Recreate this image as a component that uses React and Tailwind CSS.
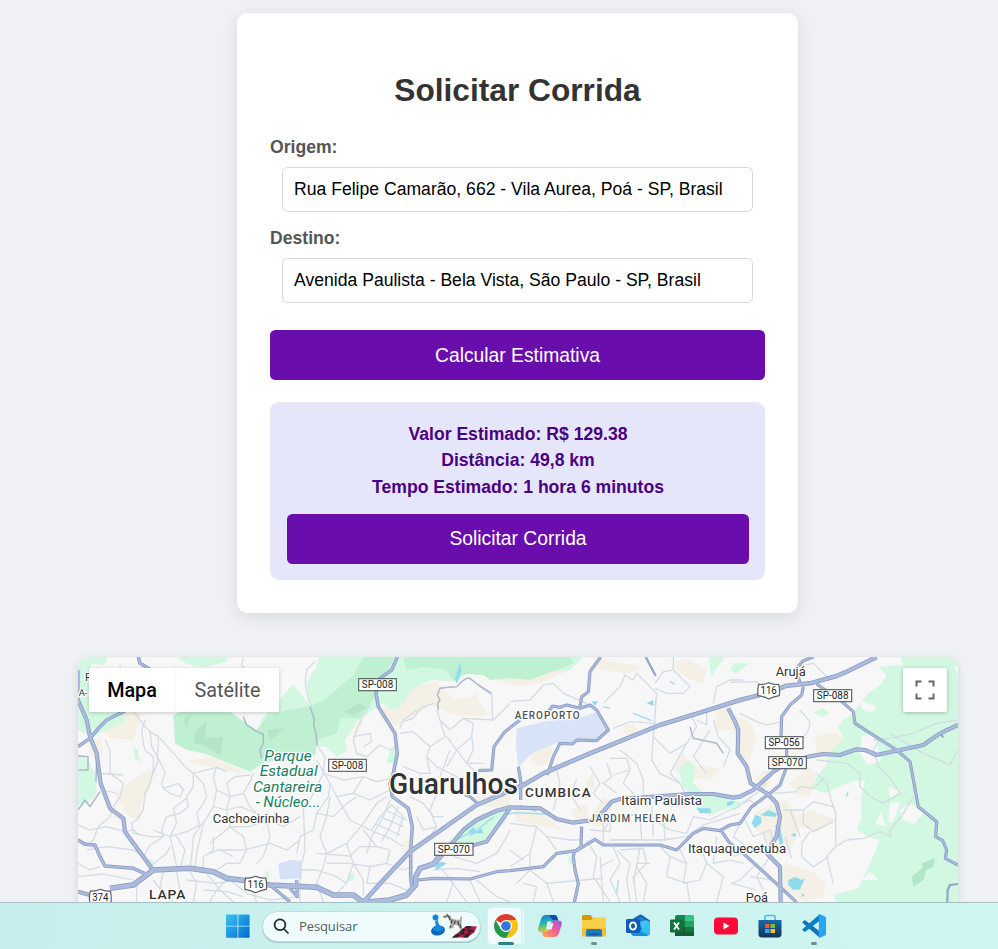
import React from "react";

const LIGHT_GREEN = [
  "24,21 112,21 104,46 66,40 60,60 100,100 160,170 165,215 120,235 70,260 24,240",
  "24,315 55,330 78,380 80,430 55,460 24,465",
  "320,21 475,21 470,36 440,42 400,52 350,42",
  "190,290 205,300 205,320 218,335 195,328",
  "208,620 250,632 246,655",
  "585,666 597,664 597,688 585,690",
  "835,672 852,672 852,692 835,692",
  "960,300 985,285 980,338 950,340",
  "570,215 590,190 670,103 722,170 700,220 600,240",
  "745,21 1000,21 950,150 860,215 840,250 825,270 832,300 800,320 770,290 738,290 720,170 708,100 740,50",
  "925,150 960,60 990,21 1100,21 1180,85 1150,95 1090,90 1060,100 1020,125 1000,160 985,175 960,178",
  "1300,80 1500,60 1540,21 1480,21 1320,40",
  "1090,630 1140,570 1190,520 1240,490 1320,475 1310,510 1250,575 1160,605",
  "1830,350 1850,335 1875,345 1870,400 1900,430 1980,440 1985,470 1920,495 1880,480 1860,430 1835,410",
  "1915,21 1965,21 1940,55 1925,80",
  "1950,50 1980,60 1990,40 2040,40 2000,70",
  "2230,185 2260,175 2280,190 2255,202",
  "2490,21 2664,21 2664,759 2300,759 2290,735 2365,715 2400,640 2430,570 2395,560 2360,540 2375,500 2372,450 2385,390 2345,395 2310,410 2265,430 2225,415 2240,380 2265,350 2285,300 2320,270 2305,230 2325,205 2350,190 2370,160 2395,130 2435,100 2450,75 2425,50 2500,45",
  "1495,620 1510,615 1512,640 1495,640",
  "1980,450 2010,455 2012,470 1980,485",
];
const MID_GREEN = [
  "310,195 370,170 480,185 560,240 590,200 645,182 722,168 770,145 850,75 880,21 972,21 950,65 920,135 890,175 870,205 812,205 800,250 742,270 735,318 700,310 660,318 580,340 540,365 490,345 440,325 400,310 350,300 315,280",
  "1000,21 1320,21 1320,85 1260,90 1240,75 1190,72 1150,90 1130,60 1060,50 1010,60",
  "1320,21 1500,21 1510,40 1460,60 1380,90 1320,85",
];
const SHADE_GREEN = [
  "380,240 410,215 405,265 460,260 450,315 400,285 370,280",
  "590,240 645,235 600,272",
  "340,210 365,190 350,235",
  "820,185 870,160 890,175 850,195",
  "2525,680 2575,640 2560,690 2530,710",
  "2555,640 2595,625 2590,650 2560,665",
];
const WHITE_PATCHES = [
  "2370,150 2420,170 2400,190 2375,175",
  "2375,260 2410,250 2435,330 2395,345 2370,310",
  "2455,410 2490,425 2460,445",
  "2435,485 2445,530 2415,520",
  "2460,460 2490,455 2470,515 2455,515",
  "2490,480 2520,460 2560,490 2530,525 2500,510",
  "2400,665 2425,690 2375,690",
  "2650,45 2664,55 2664,75",
  "2270,205 2310,190 2320,205 2290,225",
];
const TAN = [
  "100,240 160,185 215,190 190,270 120,265",
  "60,270 95,265 100,310 75,330 55,305",
  "135,430 240,355 255,365 235,430 215,455 210,510 180,500 150,460",
  "355,330 440,322 490,350 530,365 510,372 440,352 370,340",
  "925,190 980,140 1030,100 1090,135 1100,155 1020,205 980,230 935,210",
  "1030,110 1100,95 1150,150 1200,140 1230,160 1255,195 1200,200 1140,190 1080,165 1020,180",
  "1280,90 1310,70 1500,60 1420,95 1350,110",
  "1170,160 1220,130 1230,160 1210,180",
  "1385,300 1450,285 1440,330 1420,350 1380,335",
  "1330,475 1430,500 1480,540 1340,515",
  "1600,440 1630,460 1620,500 1590,530 1550,520",
  "1500,480 1555,460 1550,510 1520,505",
  "1550,390 1570,370 1575,420 1550,410",
  "1660,225 1690,220 1705,245 1680,255 1660,250",
  "1810,350 1840,310 1870,345 1950,355 1920,390 1835,380",
  "1800,40 1850,25 1910,60 1900,100 1850,85",
  "1570,25 1720,50 1680,70 1590,60",
  "1935,180 1975,170 1990,240 1940,240",
  "1980,190 2040,215 2060,260 2040,330 2005,320",
  "2050,400 2080,360 2110,370 2090,420",
  "2235,260 2290,245 2320,265 2280,340 2240,310",
  "2160,400 2215,350 2240,370 2220,440 2190,440",
  "2050,490 2100,465 2150,450 2180,500 2220,480 2300,510 2240,545 2190,530 2160,600 2125,605 2060,540",
  "2140,640 2230,665 2270,700 2260,740 2200,755 2140,720",
  "1000,575 1020,560 1020,610 1000,610",
  "1190,440 1320,430 1320,470 1240,470 1220,460",
  "1880,430 1960,470 1930,500 1890,490",
  "850,230 880,200 870,240 855,260",
];
const WATER = [
  "1170,35 1175,60 1162,100 1154,90 1164,60",
  "1095,660 1100,640 1115,635 1130,640 1105,657",
  "1195,545 1212,530 1218,545 1235,535 1240,550 1215,550 1195,562 1205,548",
  "1565,155 1585,152 1575,168",
  "1730,160 1750,150 1750,168",
  "1880,475 1920,475 1925,488 1890,490",
  "1970,458 1988,452 1985,466 1972,468",
  "2045,520 2055,495 2072,500 2075,518 2055,535",
  "2072,495 2095,480 2120,490 2118,500 2085,498",
  "2115,525 2130,530 2140,580 2130,585",
  "2155,690 2175,680 2195,690 2205,685 2190,718 2170,720 2155,705",
  "2162,555 2175,548 2180,562",
  "2195,730 2205,735 2195,742",
  "1975,456 1995,454 1985,465",
];

const MINOR = [
  "150,45 155,170", "190,185 225,230 240,245 265,260 320,320 345,350 370,370 440,352 470,365",
  "225,210 215,240 220,280 225,300 250,320 250,360 240,400 225,430 220,480 200,510 185,520 190,550",
  "240,245 245,290 275,345 285,370 275,400 280,415 325,400 340,420 330,440 300,430 280,415",
  "265,260 262,340 250,370", "105,270 120,300 120,370 160,400 150,440 130,470 120,500 85,530 70,570 55,585",
  "370,370 370,410 350,440 355,470 330,490 290,500 275,540 280,560 240,585 220,620",
  "370,370 400,400 410,440 400,460 380,490 390,530 370,560 365,620 360,655",
  "350,445 310,475 320,520 300,560 310,600 320,650", "440,350 430,380 440,420 480,440 520,430 540,395 550,370",
  "440,420 430,470 400,520 380,610 375,650", "480,440 470,480 480,530 520,560 530,600 510,640 470,640 440,660",
  "420,580 480,530 540,530 590,510 640,530 690,500", "440,600 520,600 600,580 650,600 690,570",
  "430,470 470,480 510,470 560,490 590,510 600,560 580,620 560,640", "250,540 300,560 350,545 400,520",
  "190,550 240,560 280,560", "210,555 190,540 165,545", "24,525 60,540 110,530 165,545", "50,600 110,590 190,600 220,620",
  "80,370 120,372 160,375", "100,420 140,430", "24,680 100,672 190,690", "24,640 60,660 90,650",
  "300,590 290,610 240,650", "330,655 345,600 320,560", "400,655 400,620 430,600 430,560", "490,620 450,600 420,610",
  "480,440 470,400 495,380 540,375", "520,430 540,470 560,490", "470,690 440,720 420,755", "360,665 380,700 370,755",
  "320,665 330,720 350,755", "250,690 280,730 300,755", "410,670 450,720 490,755", "280,665 270,710 310,755",
  "480,690 530,730 600,750 690,740", "200,700 200,755", "400,720 470,725 520,740", "540,700 560,755", "350,690 440,700 500,690",
  "520,21 515,45 550,90 600,100",
  "735,35 710,60 705,100 715,150 725,170", "740,285 765,320 760,370 740,410 720,450 700,470 705,600 690,660 690,755",
  "740,330 780,400 775,440 740,490 730,540 690,560 680,610", "760,370 820,390 880,380 920,395 965,385",
  "900,165 880,195 860,240 850,270 860,310 890,320 930,285 960,300 975,290", "850,260 900,250 905,275 880,290",
  "780,400 800,440 850,430 900,450 960,420", "780,440 770,500 750,560 770,610 760,650 740,700 760,755",
  "800,440 840,510 900,540 960,565 1000,590", "740,490 790,500 830,460 860,440",
  "770,610 830,580 880,520 920,460 950,440", "850,430 880,380", "905,540 930,500 965,465 1000,500 980,560",
  "880,540 920,590 960,600 950,640 1000,660 1030,650", "830,580 850,640 830,700 800,730", "740,610 840,618 870,590 920,590",
  "770,640 840,640 900,650 950,640", "690,660 740,660 800,680 830,700", "930,500 1000,530", "945,480 1010,510", "915,520 990,555",
  "960,450 940,500 905,560 890,610", "985,470 960,530 935,575", "850,640 880,690 880,740", "900,650 890,700 960,700 1010,720",
  "1100,180 1110,210 1140,240 1180,205 1210,220 1205,260 1160,300 1130,350",
  "1110,210 1125,260 1080,290 1070,320 1100,350 1160,380 1190,420", "1080,290 1030,245 990,250",
  "1130,260 1190,340 1220,370 1210,410", "1180,205 1270,210 1320,160", "1230,110 1265,135 1268,210",
  "1205,260 1210,300 1190,340 1240,340", "1070,320 1080,370 1050,370 1060,400", "1140,300 1110,380 1130,400",
  "1050,370 1000,350", "1100,430 1080,480 1100,530 1080,560", "1040,180 1000,210 990,235", "1090,160 1050,175 1030,205 1000,215",
  "1020,440 1060,460 1090,500 1120,500", "1040,500 1060,540 1100,530", "1110,650 1150,700 1130,755", "1140,690 1190,755", "1200,690 1230,755",
  "1220,690 1280,740 1320,755", "1150,620 1220,640 1280,610 1310,560 1320,540", "1090,660 1160,655 1230,665",
  "1320,155 1380,150 1420,105 1450,100 1480,130 1550,160", "1600,160 1650,110 1665,75 1690,90 1700,70 1730,100 1760,130 1755,170",
  "1755,100 1780,65 1810,60 1840,90 1860,110 1840,130 1790,130 1755,115", "1810,60 1810,21", "1760,130 1750,260 1800,310 1850,280 1880,230 1860,190",
  "1750,260 1745,330 1770,370 1830,400 1850,440 1840,470", "1850,280 1800,370 1830,400", "1630,235 1680,215 1760,220",
  "1930,160 1940,110 1980,90 2020,90", "1620,325 1670,325 1680,360 1660,400 1690,430 1700,460", "1610,340 1625,380 1600,400 1640,430",
  "1560,350 1590,400 1570,430 1600,460", "1650,300 1700,340 1720,390 1720,440", "1680,360 1630,375", "1880,210 1910,225 1910,180",
  "1930,210 1945,260 1980,300 1960,350", "1920,240 1870,320 1910,370", "1520,390 1500,430 1530,480", "1460,360 1470,400 1450,480",
  "1320,520 1400,530 1430,560 1500,570 1530,570", "1400,530 1380,610 1380,660 1430,700 1450,755", "1430,560 1460,600",
  "1380,660 1340,700", "1360,700 1400,710 1390,755", "1430,700 1540,690 1600,685", "1380,610 1320,650", "1320,600 1360,630",
  "1550,570 1580,620 1570,680 1620,755", "1590,620 1600,755", "1630,590 1650,640 1620,690 1650,755", "1650,600 1720,595 1730,640 1690,680 1700,755",
  "1710,590 1700,650 1730,700 1720,755", "1740,640 1700,640 1690,700", "1640,600 1680,640 1670,690 1680,755", "1590,650 1630,630",
  "1770,590 1800,620 1790,680 1850,700 1860,755", "1830,600 1850,640 1840,700 1890,690 1910,640 1890,590", "1910,640 1960,680 1940,755",
  "1940,560 1930,640 1980,630 2020,640", "1800,620 1850,640", "1600,545 1620,510 1680,495 1740,500 1800,540 1850,550",
  "1620,570 1700,570 1780,570 1850,560 1900,525 1980,500 2010,490", "1710,500 1715,570", "1780,490 1785,570", "1745,460 1750,560",
  "1600,500 1600,580", "1560,540 1620,545 1620,510", "1850,550 1870,500 1920,510 1980,480", "2020,500 2050,560 2100,540 2110,570",
  "2010,520 1990,560 2030,590", "1990,620 2060,590 2100,620 2060,680 2080,720", "2060,640 2010,690 1985,700 2060,720", "2040,680 2110,690",
  "2080,550 2110,640", "2140,480 2200,480 2230,455 2290,470 2297,490 2297,590 2270,620 2290,700",
  "2240,370 2270,400 2280,440 2297,490", "2110,430 2180,425 2190,410 2230,415 2265,380", "2200,480 2200,520 2230,545 2290,515",
  "2220,545 2195,580 2195,620 2230,650 2275,620", "2160,480 2190,560", "2145,560 2165,625", "2190,180 2220,215 2215,240 2195,270 2190,300",
  "2135,215 2090,225 2060,215 2010,190", "2240,330 2330,340 2370,370 2370,410 2400,440", "1980,97 2060,95 2080,115",
  "2180,50 2230,40 2270,80 2240,100", "2297,590 2330,570 2380,565 2430,545 2460,560 2460,540 2500,490 2530,440",
  "2430,265 2410,300 2425,350 2465,390 2490,430 2440,460 2400,440", "2410,270 2460,265 2530,250 2600,220 2664,210",
  "2460,250 2560,310 2640,345 2664,300", "2020,460 2040,450 2060,470", "1990,480 2030,450 2060,430 2090,400",
];
const RIDGES = [
  "520,200 530,225 560,245 580,252 580,280 570,300 575,325", "720,170 732,205 731,225 738,250 742,285",
  "1105,180 1103,160 1110,150 1102,135 1110,115 1135,112 1160,110 1175,95 1190,85 1200,85 1225,105 1265,130",
  "24,317 54,320 54,360 26,360", "24,480 45,450 60,470 90,425", "80,315 78,395",
  "1860,230 1870,265 1940,280 1960,310",
];
const MAJOR = [
  ["24,150 50,210 60,260 80,310 92,400 120,475 160,505 165,545 245,655", 11],
  ["24,290 60,265 85,235 110,210 160,185 200,160", 9],
  ["205,21 210,40 240,58", 9],
  ["24,60 24,160", 8],
  ["24,570 45,583 75,585 90,620 105,648 190,655 235,675", 9],
  ["24,725 60,735", 11],
  ["120,715 190,705 250,660 360,655 430,665 470,685 530,692 600,705 740,712 790,735 850,735 880,757 960,750 1010,735 1037,705 1037,680 1050,655 1095,640", 15],
  ["1095,640 1130,600 1180,540 1220,510 1280,482 1320,472 1410,475 1460,507 1510,518 1570,510 1600,485 1625,455 1650,447 1860,432 1930,432 1990,443 2010,440 2050,420 2110,365 2150,340 2215,320 2260,312 2310,315 2360,298 2385,300 2420,315 2480,302 2560,285 2610,250 2664,225", 11],
  ["880,757 940,690 1020,605 1220,465 1360,405 1420,370 1560,310 1770,225 1900,185 2010,150 2090,130 2150,107 2220,100 2300,78 2330,65 2420,21", 12],
  ["982,21 965,60 930,85 918,130 925,170 975,250 982,310 970,370 960,400 967,440 1015,475 1027,530 1022,600 1022,680 1025,710", 9],
  ["1045,690 1090,685 1200,687 1280,665 1320,662 1420,650 1460,610 1520,602 1575,568 1600,585 1700,585 1770,585 1820,600 1870,550 1900,535 1950,542 1980,525 2010,520 2045,470 2100,430 2130,405 2150,350 2150,290 2133,260 2135,200 2160,165 2195,135 2200,110", 8],
  ["1090,640 1110,610 1160,600 1250,575 1320,475", 10],
  ["1955,545 1980,580 2020,610 2140,720 2180,757", 8],
  ["1975,175 1995,215 2005,240 2003,310 2030,350 2042,400 2090,430 2120,460 2130,500 2120,560 2100,590 2090,610 2130,650 2132,757", 11],
  ["2240,102 2310,150 2350,185 2355,220 2480,300 2520,335 2545,470 2600,515 2597,560 2618,572 2630,600 2626,625 2664,645", 8],
  ["2175,60 2200,32 2230,21", 8], ["2185,80 2190,100", 8],
  ["2632,757 2633,720 2640,705 2664,702", 5],
  ["1225,362 1265,360 1272,290 1305,245 1350,210", 8],
  ["1435,185 1448,168 1470,172 1490,165 1530,175 1560,165 1580,180 1615,240 1580,272 1520,270 1508,282 1470,280 1450,320 1432,375", 8],
  ["1592,21 1560,65 1555,125 1535,140 1530,170", 8],
  ["1345,350 1353,400 1352,450", 8],
  ["1535,530 1533,590 1513,605 1510,620 1515,660 1525,700 1513,757", 8],
  ["1727,21 1757,77", 5], ["1185,435 1200,440 1222,460", 7],
  ["680,690 682,740 660,715", 8], ["600,705 660,755", 8], ["2610,250 2620,262", 4],
];

function Poly({ list, fill }) {
  return list.map((p, i) => <polygon key={i} points={p} fill={fill} />);
}

function Lines({ list, stroke, width }) {
  return (
    <g fill="none" stroke={stroke} strokeWidth={width} strokeLinejoin="round">
      {list.map((p, i) => <polyline key={i} points={p} />)}
    </g>
  );
}

function Shield({ x, y, w, label }) {
  return (
    <g>
      <rect x={x} y={y} width={w} height="36" fill="#fff" stroke="#5b5f63" strokeWidth="3.5" />
      <text x={x + w / 2} y={y + 29} fontSize="30" textAnchor="middle" textLength={w - 19} lengthAdjust="spacingAndGlyphs" fill="#222">{label}</text>
    </g>
  );
}

function Hexagon({ x, y, label }) {
  return (
    <g transform={`translate(${x} ${y})`}>
      <path d="M3 6 Q18 8 33 1 Q48 8 63 6 Q67 20 65 40 Q48 42 33 50 Q18 42 1 40 Q-1 20 3 6Z" fill="#fff" stroke="#5b5f63" strokeWidth="3.5" />
      <text x="33" y="36" fontSize="30" textAnchor="middle" textLength="49" lengthAdjust="spacingAndGlyphs" fill="#222">{label}</text>
    </g>
  );
}

function Label({ x, y, w, size, children, ...rest }) {
  return (
    <text x={x} y={y} fontSize={size} textLength={w} lengthAdjust="spacingAndGlyphs" {...rest}>{children}</text>
  );
}

function CityMap() {
  const halo = { paintOrder: "stroke", stroke: "#fff", strokeWidth: 8, strokeLinejoin: "round" };
  return (
    <svg className="block h-[246px] w-[880px]" viewBox="24 21 2640 738" fontFamily="Roboto, sans-serif">
      <rect x="24" y="21" width="2640" height="738" fill="#f7f7f7" />
      <Poly list={TAN} fill="#f5f0e6" />
      <Poly list={LIGHT_GREEN} fill="#d3f8e2" />
      <Poly list={MID_GREEN} fill="#bef0d1" />
      <Poly list={SHADE_GREEN} fill="#b3e6c6" opacity=".45" />
      <Poly list={WHITE_PATCHES} fill="#f7f7f7" />
      <polygon points="1340,235 1420,215 1540,200 1580,185 1615,240 1580,270 1460,280 1385,310 1345,352 1338,290" fill="#d8e3f7" />
      <polygon points="625,642 660,630 695,632 695,685 630,688" fill="#d5e1f7" />
      <Poly list={WATER} fill="#90daee" />
      <Lines list={["1165,565 1200,548 1220,540 1270,502", "1300,495 1340,488 1425,492", "1690,190 1745,212", "1350,465 1400,485", "1645,690 1640,730", "2330,440 2334,425", "1800,95 1815,103", "1600,170 1620,175"]} stroke="#9adced" width={4} />
      <Lines list={MINOR} stroke="#d3dbe5" width={3.8} />
      <Lines list={RIDGES} stroke="#aeb8ca" width={4.5} />
      {MAJOR.map(([p, w], i) => (
        <polyline key={i} points={p} fill="none" stroke="#8799c4" strokeWidth={w + 1.500} strokeLinejoin="round" />
      ))}
      {MAJOR.map(([p, w], i) => (
        <polyline key={i} points={p} fill="none" stroke="#abbbdc" strokeWidth={w - 3} strokeLinejoin="round" />
      ))}
      <Shield x={866} y={86} w={113} label="SP-008" />
      <Shield x={776} y={328} w={113} label="SP-008" />
      <Shield x={1094} y={580} w={115} label="SP-070" />
      <Shield x={2231} y={119} w={114} label="SP-088" />
      <Shield x={2086} y={260} w={113} label="SP-056" />
      <Shield x={2096} y={320} w={113} label="SP-070" />
      <Hexagon x={524} y={678} label="116" />
      <Hexagon x={2063} y={97} label="116" />
      <Hexagon x={58} y={717} label="374" />
      <g fill="#333" style={halo}>
        <text x="45" y="94" fontSize="32">F</text>
        <text x="26" y="137" fontSize="28">A-</text>
        <Label x="428" y="518" size="41" w="230">Cachoeirinha</Label>
        <Label x="957" y="432" size="88" w="387" fontWeight="500">Guarulhos</Label>
        <Label x="1654" y="466" size="41" w="242">Itaim Paulista</Label>
        <Label x="1854" y="610" size="41" w="294">Itaquaquecetuba</Label>
        <Label x="2117" y="79" size="41" w="90">Arujá</Label>
        <Label x="2027" y="756" size="41" w="67">Poá</Label>
        <g fontWeight="500">
          <Label x="237" y="747" size="39" w="112" letterSpacing="2.500">LAPA</Label>
          <Label x="1365" y="441" size="39" w="200" letterSpacing="3">CUMBICA</Label>
          <Label x="1334" y="208" size="30" w="198" letterSpacing="3" fill="#505358">AEROPORTO</Label>
          <Label x="1558" y="517" size="30" w="264" letterSpacing="3" fill="#505358">JARDIM HELENA</Label>
        </g>
      </g>
      <g fill="#188062" fontStyle="italic" textAnchor="middle" style={halo}>
        <Label x="654" y="332" size="45" w="142">Parque</Label>
        <Label x="656" y="378" size="45" w="174">Estadual</Label>
        <Label x="653" y="425" size="45" w="208">Cantareira</Label>
        <Label x="654" y="471" size="45" w="194">- Núcleo...</Label>
      </g>
    </svg>
  );
}

function Field({ label, value }) {
  return (
    <div className="flex flex-col">
      <label className="mb-[10px] block text-[17.6px] leading-[20px] font-bold text-[#555]">{label}</label>
      <input
        readOnly
        defaultValue={value}
        className="mx-3 mb-4 h-[45px] rounded-[5.5px] border border-[#d8d8dc] px-[11px] text-[17.6px] text-black outline-none"
      />
    </div>
  );
}

function PurpleButton({ children }) {
  return (
    <button className="flex h-[50px] w-full items-center justify-center rounded-[5.5px] bg-[#6a0dad] text-[19.3px] leading-[22px] text-white">{children}</button>
  );
}

function AppSlot({ children, active, open }) {
  return (
    <div className="relative flex h-[38px] w-11 shrink-0 items-center justify-center">
      {active && <div className="absolute inset-y-0 left-[3px] w-[38px] rounded-[4px] border border-[#d6f0f0] bg-[#e0f7f6]" />}
      {active && <div className="absolute inset-y-0 left-[3px] w-[35px] rounded-[4px] border border-[#d6f0f0] bg-[#f0fcfb]" />}
      <svg className="relative size-6" viewBox="0 0 24 24">{children}</svg>
      {active && <div className="absolute bottom-0 h-[3px] w-4 rounded-full bg-[#2d8388]" />}
      {open && <div className="absolute bottom-0 h-[3px] w-[6px] rounded-full bg-[#7b8b8b]" />}
    </div>
  );
}

function Taskbar() {
  return (
    <div className="absolute inset-x-0 bottom-0 flex h-[47px] items-center border-t border-[#9fc0c8] bg-linear-to-r from-[#c7eeec] to-[#d0f6f2] pl-[226px]">
      <svg className="size-6 shrink-0" viewBox="0 0 24 24">
        <defs>
          <linearGradient id="win" x1="0" y1="0" x2="24" y2="24" gradientUnits="userSpaceOnUse">
            <stop offset="0" stopColor="#3cc5f5" /><stop offset="1" stopColor="#0068c9" />
          </linearGradient>
        </defs>
        <path d="M0 1.5Q0 .5 1 .5h10.500v11.200H0zM12.300 .5h10.500q.8 0 .8 1v10.200H12.300zM0 12.500h11.500v11.200H1q-1 0-1-1zM12.300 12.500h11.300v10.200q0 1-.8 1H12.300z" fill="url(#win)" />
      </svg>
      <div className="ml-3 flex h-[31px] w-[219px] shrink-0 items-center rounded-full border border-[#bddfdf] bg-[#effcfb] pl-[10px] shadow-[0_1px_0_#a5c8c9]">
        <svg className="size-4" viewBox="0 0 16 16" fill="none" stroke="#20272a" strokeWidth="1.7" strokeLinecap="round">
          <circle cx="7" cy="6.800" r="5.400" /><path d="M11 11l4 4" />
        </svg>
        <span className="ml-[10px] translate-y-px font-['Open_Sans',sans-serif] text-[13px] tracking-[-0.1px] text-[#52605f]">Pesquisar</span>
        <svg className="ml-auto mr-px h-7 w-[50px]" viewBox="0 0 50 28">
          <ellipse cx="9" cy="18.500" rx="7" ry="5" fill="#0868b9" transform="rotate(-12 9 18.500)" />
          <path d="M5 17C8 14 6 11 6 9l3-1c0 3 1 6 6 8z" fill="#1688dd" />
          <ellipse cx="9" cy="16.500" rx="5" ry="3" fill="#1688dd" />
          <circle cx="6.500" cy="5.500" r="3" fill="#1386d9" />
          <path d="M13.500 4.500l3-1.500 1.500-2 1.500 2 2 .5 1 3 4 1 4 .5 1.500-4 1 .2-.3 5.300-.5 3 1 5-2.500-.2-1.500-4-4-1-1 4.200-2.200-.5.2-4.500-2-3.500-1-2.500-3.500.2z" fill="#aaa9a4" />
          <path d="M18 3l2 2 1 3M23 8l-1 4M26 8.500l-.5 4M29 9l.5 4.500M14.500 5l2.500-.5M21.500 13l-.5 3.500M31 12l1 4" stroke="#494b49" strokeWidth="1.200" fill="none" />
          <path d="M23 25.500L37 14l11 .5-3 6-7 5z" fill="#c4183b" />
          <path d="M23 25.500l4-3.300 5 .3-4 3zM31 19l3-2.500 4 .5-3.500 3zM38 14l5 .3-3 2.700-4-1.200zM38 17.500l5-.3 2 2-5 1.800zM34 25.500l3-4 5-.5-3 4.500zM31 20l4 0 1 2-4 1z" fill="#222831" />
        </svg>
      </div>
      <div className="ml-[3px] flex">
        <AppSlot active>
          <path d="M12 12L1.608 6A12 12 0 0 1 22.392 6z" fill="#df3b2f" />
          <path d="M12 6h10.392A12 12 0 0 1 12 24l5.200-9z" fill="#fbc116" />
          <path d="M1.608 6A12 12 0 0 0 12 24l5.200-9H6.800z" fill="#279847" />
          <circle cx="12" cy="12" r="6" fill="#fff" />
          <circle cx="12" cy="12" r="4.800" fill="#3376e0" />
        </AppSlot>
        <AppSlot>
          <defs>
            <linearGradient id="cpa" x1="0" y1="0" x2=".3" y2="1"><stop stopColor="#1673d9" /><stop offset=".5" stopColor="#22b6b5" /><stop offset="1" stopColor="#d9ca32" /></linearGradient>
            <linearGradient id="cpb" x1="1" y1="0" x2="0" y2="1"><stop stopColor="#a252e7" /><stop offset=".5" stopColor="#f06291" /><stop offset="1" stopColor="#ffad49" /></linearGradient>
          </defs>
          <path d="M8 1h8.500q2 0 2.700 2l1 3.500H16q-2.200 0-3 2.500l-1.700 5.500Q10 18 7.500 18H3Q-.8 18 .3 14L3 5Q4.300 1 8 1z" fill="url(#cpa)" />
          <path d="M11 1h5.500q2 0 2.700 2l1 3.500H16q-1.500 0-2.300-1.500T11 1z" fill="#174ca9" />
          <path d="M16 23H7.500q-2 0-2.700-2L4 18h3.500q2.500 0 3.500-3l2-6q.8-2.500 3-2.500h4.500q4 0 3.200 4L21 19q-1.300 4-5 4z" fill="url(#cpb)" />
          <path d="M9.500 7.500h4q-.5.700-.8 1.700l-2 6.300H8z" fill="#e0f8f4" />
          <path d="M12.700 9.200h2.800l-2 6.300h-3z" fill="#e0f8f4" />
        </AppSlot>
        <AppSlot open>
          <path d="M0 2.500Q0 1 1.500 1h7L11 4v4H0z" fill="#d9940a" />
          <path d="M0 6h9l2-2.500h11.500Q24 3.500 24 5v17H0z" fill="#fbcf47" />
          <path d="M0 14h24v8.500H0z" fill="#f7be31" />
          <path d="M4 22.500V17q0-2 2-2h12q2 0 2 2v5.500z" fill="#187cc5" />
          <path d="M7 19.500h10v1.300H7z" fill="#075394" />
        </AppSlot>
        <AppSlot>
          <path d="M5 6l8-5q1.500-1 3 0l8 5.500V18q0 4-4 4H9q-4 0-4-4z" fill="#1768b8" />
          <path d="M8 7l7-4 8 6-8 5z" fill="#1c83d3" />
          <path d="M14 8l6-2 4 2-8 8z" fill="#43c3f5" />
          <path d="M24 7.500V18q0 4-4 4H9l15-14.500z" fill="#35bff0" />
          <path d="M8 13l14 8q-2 1.500-4 1H9q-3 0-3-3z" fill="#1593df" />
          <rect y="5" width="14" height="14" rx="1.500" fill="#0f5eb4" />
          <ellipse cx="7" cy="12" rx="3" ry="3.600" fill="none" stroke="#fff" strokeWidth="1.900" />
        </AppSlot>
        <AppSlot>
          <path d="M5 2.500Q5 1 6.500 1H15v21H5z" fill="#188456" />
          <path d="M15 1h7.500Q24 1 24 2.500V7h-9z" fill="#35c481" />
          <path d="M5 7h10v6H5z" fill="#107a43" /><path d="M15 7h9v6h-9z" fill="#20a366" />
          <path d="M15 13h9v5h-9z" fill="#107c41" /><path d="M5 13h10v9H5zM15 18h9v4h-9z" fill="#185c37" />
          <rect y="5.500" width="13" height="13" rx="1.200" fill="#10713d" />
          <path d="M4 8.500l5 7M9 8.500l-5 7" stroke="#fff" strokeWidth="1.900" />
        </AppSlot>
        <AppSlot>
          <rect y="3.500" width="24" height="17" rx="4" fill="#fd0a38" />
          <path d="M9.500 8.500v7l6-3.500z" fill="#fff" />
        </AppSlot>
        <AppSlot>
          <defs><linearGradient id="store" x2="0" y2="1"><stop stopColor="#176aa8" /><stop offset="1" stopColor="#193258" /></linearGradient></defs>
          <path d="M7 7V3q0-1.500 1.500-1.500h7Q17 1.500 17 3v4" fill="none" stroke="#43c1eb" strokeWidth="1.700" />
          <path d="M.5 6h23v14q0 3.500-3.500 3.500H4Q.5 23.500.5 20z" fill="url(#store)" />
          <path d="M7 10h4.500v4H7z" fill="#f15b2a" /><path d="M12.500 10H17v4h-4.500z" fill="#7fbd24" />
          <path d="M7 15h4.500v4H7z" fill="#25aee9" /><path d="M12.500 15H17v4h-4.500z" fill="#fec024" />
        </AppSlot>
        <AppSlot open>
          <path d="M1.300 7.300L2.800 6 18 17.500V24L.7 9q-.8-.9.6-1.700z" fill="#1474b9" />
          <path d="M1.300 16.700L2.800 18 18 6.500V0L.7 15q-.8.900.6 1.700z" fill="#087fc9" />
          <path d="M17.500 0l5.500 2.500q1 .5 1 1.500v16q0 1-1 1.500L17.500 24q-.7 0-.7-.8V.8q0-.8.7-.8z" fill="#28a5ee" />
        </AppSlot>
      </div>
    </div>
  );
}

export default function App() {
  return (
    <div className="relative h-[949px] w-[998px] overflow-hidden bg-[#f0f1f5] pt-[13px] font-['Liberation_Sans',Arial,sans-serif]">
      <main className="ml-[237px] flex h-[600px] w-[561px] flex-col rounded-[11px] bg-white px-[33px] pt-[57px] shadow-[0_4px_17px_rgba(0,0,0,0.1)]">
        <h1 className="mb-[27px] text-center text-[31.68px] leading-10 font-bold text-[#333]">Solicitar Corrida</h1>
        <Field label="Origem:" value="Rua Felipe Camarão, 662 - Vila Aurea, Poá - SP, Brasil" />
        <Field label="Destino:" value="Avenida Paulista - Bela Vista, São Paulo - SP, Brasil" />
        <div className="mt-[11px]"><PurpleButton><span className="translate-y-px">Calcular Estimativa</span></PurpleButton></div>
        <section className="mt-[22px] h-[178px] rounded-[9px] bg-[#e6e6fa] pr-4 pl-[17px] pt-[19px] text-center text-[17.6px] leading-[26.4px] font-bold text-[#4b0082]">
          <p>Valor Estimado: R$ 129.38</p>
          <p>Distância: 49,8 km</p>
          <p className="mb-[13.8px]">Tempo Estimado: 1 hora 6 minutos</p>
          <div className="font-normal"><PurpleButton>Solicitar Corrida</PurpleButton></div>
        </section>
      </main>
      <section className="relative mt-[44px] ml-[78px] h-[260px] w-[880px] overflow-hidden rounded-[11px] shadow-[0_2px_8px_rgba(0,0,0,0.12)]">
        <CityMap />
        <div className="absolute top-[11px] left-[11px] flex h-11 font-[Roboto,sans-serif] text-[19.8px] shadow-[0_1px_4px_rgba(0,0,0,0.2)]">
          <button className="w-[86px] rounded-[2px] bg-white pt-px font-medium text-black">Mapa</button>
          <button className="ml-px w-[103px] rounded-[2px] bg-white pt-px text-[#565656]">Satélite</button>
        </div>
        <button className="absolute top-[11px] right-[11px] flex size-11 items-center justify-center rounded-[2px] bg-white pr-px shadow-[0_1px_4px_rgba(0,0,0,0.25)]">
          <svg className="size-5" viewBox="0 0 20 20" fill="none" stroke="#666" strokeWidth="2">
            <path d="M1.500 6.500V1.500h5M13.500 1.500h5v5M18.500 13.500v5h-5M6.500 18.500H1.500v-5" />
          </svg>
        </button>
      </section>
      <Taskbar />
    </div>
  );
}
